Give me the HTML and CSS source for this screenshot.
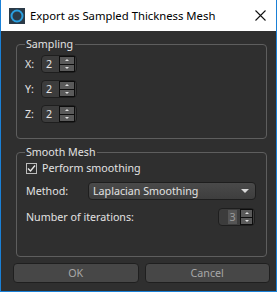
FILE: index.html
```html
<!DOCTYPE html>
<html lang="en">
<head>
    <meta charset="UTF-8">
    <meta name="viewport" content="width=device-width, initial-scale=1.0">
    <title>Export as Sampled Thickness Mesh</title>
    <link rel="stylesheet" href="styles.css">
</head>
<body>
    <div class="window">
        <div class="titlebar">
            <svg class="app-icon" width="16" height="16" viewBox="0 0 16 16">
                <rect width="16" height="16" fill="#2b3a47"/>
                <circle cx="8" cy="8" r="5.5" fill="none" stroke="#2a9fe0" stroke-width="2"/>
            </svg>
            <span class="title">Export as Sampled Thickness Mesh</span>
            <svg class="close" width="11" height="11" viewBox="0 0 11 11">
                <path d="M0.5 0.5 L10.5 10.5 M10.5 0.5 L0.5 10.5" stroke="#111" stroke-width="1.1"/>
            </svg>
        </div>

        <div class="content">
            <fieldset class="group sampling">
                <legend>Sampling</legend>
                <div class="axis-row">
                    <label>X:</label>
                    <div class="spinbox"><span class="value">2</span><span class="spin-buttons"><span class="up"></span><span class="down"></span></span></div>
                </div>
                <div class="axis-row">
                    <label>Y:</label>
                    <div class="spinbox"><span class="value">2</span><span class="spin-buttons"><span class="up"></span><span class="down"></span></span></div>
                </div>
                <div class="axis-row">
                    <label>Z:</label>
                    <div class="spinbox"><span class="value">2</span><span class="spin-buttons"><span class="up"></span><span class="down"></span></span></div>
                </div>
            </fieldset>

            <fieldset class="group smooth">
                <legend>Smooth Mesh</legend>
                <div class="check-row">
                    <span class="checkbox">
                        <svg width="9" height="9" viewBox="0 0 9 9"><path d="M1 4.5 L3.5 7 L8 1.5" fill="none" stroke="#e6e6e6" stroke-width="1.4"/></svg>
                    </span>
                    <span>Perform smoothing</span>
                </div>
                <div class="method-row">
                    <label>Method:</label>
                    <div class="combo">
                        <span>Laplacian Smoothing</span>
                        <span class="combo-arrow"></span>
                    </div>
                </div>
                <div class="iter-row">
                    <label>Number of iterations:</label>
                    <div class="spinbox wide"><span class="value selected">3</span><span class="spin-buttons"><span class="up"></span><span class="down"></span></span></div>
                </div>
            </fieldset>

            <div class="buttons">
                <button>OK</button>
                <button>Cancel</button>
            </div>
        </div>
    </div>
</body>
</html>
```

FILE: styles.css
```css
body {
    margin: 0;
    font-family: "Noto Sans", "Open Sans", sans-serif;
    font-size: 10.7px;
    background: #2f2f2f;
}
.window {
    width: 277px;
    height: 292px;
    box-sizing: border-box;
    border: 1px solid #1a80d6;
    border-top: none;
    background: #2f2f2f;
    color: #e2e2e2;
    display: flex;
    flex-direction: column;
}
.titlebar {
    height: 31px;
    flex: none;
    background: #fff;
    display: flex;
    align-items: center;
    padding-left: 8px;
    color: #000;
}
.app-icon {
    margin-right: 5px;
}
.title {
    font-size: 11.3px;
    flex: 1;
}
.close {
    margin-right: 10px;
}
.content {
    padding: 6px 9px 0 15px;
    display: flex;
    flex-direction: column;
}
.group {
    margin: 0;
    border: 1px solid #5e5e5e;
    border-radius: 4px;
    padding: 4px 9px 15px 8px;
    display: flex;
    flex-direction: column;
}
.group legend {
    padding: 0 2px 0 1px;
    margin-left: 0;
    line-height: 14px;
    color: #e2e2e2;
}
.sampling {
    gap: 7px;
}
.axis-row {
    display: flex;
    align-items: center;
    height: 18px;
}
.axis-row label {
    width: 16px;
}
.spinbox {
    width: 36px;
    height: 18px;
    box-sizing: border-box;
    border: 1px solid #1e1e1e;
    border-radius: 4px;
    background: #3c3c3c;
    display: flex;
    align-items: center;
    padding: 0 1px 0 4px;
}
.spinbox .value {
    flex: 1;
    line-height: 14px;
    color: #e6e6e6;
}
.spin-buttons {
    width: 16px;
    height: 16px;
    box-sizing: border-box;
    border: 1px solid #0d0d0d;
    background: #0d0d0d;
    display: flex;
    flex-direction: column;
    gap: 1px;
}
.spin-buttons span {
    flex: 1;
    background: #5a5a5a;
    display: flex;
    align-items: center;
    justify-content: center;
}
.spin-buttons .up::after {
    content: "";
    border: 2px solid transparent;
    border-bottom: 2px solid #e0e0e0;
    border-top: none;
}
.spin-buttons .down::after {
    content: "";
    border: 2px solid transparent;
    border-top: 2px solid #e0e0e0;
    border-bottom: none;
}
.smooth {
    margin-top: 6px;
    padding: 0 10px 30px 8px;
}
.check-row {
    height: 18px;
    display: flex;
    align-items: center;
    gap: 5px;
    margin-left: 1px;
}
.checkbox {
    width: 11px;
    height: 11px;
    box-sizing: border-box;
    border: 1px solid #bcbcbc;
    display: flex;
    align-items: center;
    justify-content: center;
}
.method-row {
    margin-top: 5px;
    display: flex;
    align-items: center;
    margin-left: 1px;
}
.method-row label {
    width: 62px;
}
.combo {
    flex: 1;
    height: 18px;
    box-sizing: border-box;
    border: 1px solid #1e1e1e;
    border-radius: 4px;
    background: linear-gradient(#4a4a4a, #3e3e3e);
    display: flex;
    align-items: center;
    padding: 0 6px 0 4px;
}
.combo span:first-child {
    flex: 1;
}
.combo-arrow {
    border: 4px solid transparent;
    border-top: 4px solid #d8d8d8;
    border-bottom: none;
}
.iter-row {
    margin-top: 8px;
    display: flex;
    align-items: center;
    justify-content: space-between;
    margin-left: 1px;
    margin-right: 1px;
}
.spinbox.wide {
    width: 37px;
    padding-left: 9px;
}
.value.selected {
    flex: none;
    width: 9px;
    margin-right: 3px;
    background: #555;
    color: #9a9a9a;
    text-align: center;
}
.buttons {
    margin: 6px -3px 0 -3px;
    display: flex;
    gap: 6px;
}
.buttons button {
    flex: 1;
    height: 20px;
    border: 1px solid #1f1f1f;
    border-radius: 4px;
    background: #474747;
    color: #a8a8a8;
    font-family: "Noto Sans", sans-serif;
    font-size: 10.7px;
    padding: 0;
}
```
